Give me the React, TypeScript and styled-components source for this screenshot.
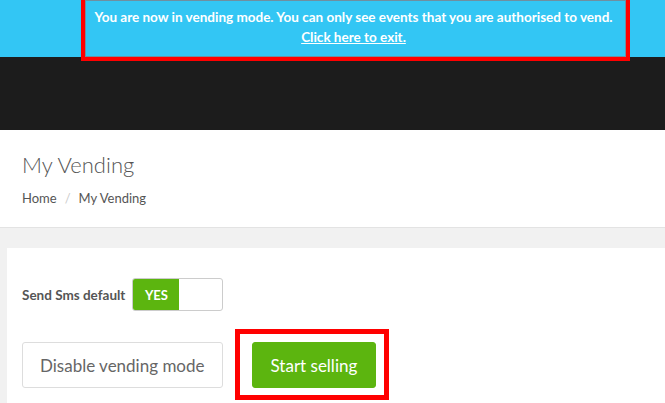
import styled, { createGlobalStyle } from 'styled-components';

const GlobalStyle = createGlobalStyle`
  html, body {
    margin: 0;
    padding: 0;
    background: #f1f1f1;
    font-family: Lato, "Noto Sans", sans-serif;
    color: #555;
    overflow: hidden;
  }
`;

const Page = styled.div`
  width: 665px;
  height: 403px;
  overflow: hidden;
  display: flex;
  flex-direction: column;
`;

const VendingBanner = styled.div`
  position: relative;
  height: 57px;
  background: #33c6f4;
  color: #fff;
  font-weight: 700;
  font-size: 13.5px;
  line-height: 20px;
  display: flex;
  flex-direction: column;
  align-items: center;
  padding: 7px 0 0 42px;
  box-sizing: border-box;
`;

const ExitLink = styled.a`
  color: #fff;
  text-decoration: underline;
  cursor: pointer;
`;

const Highlight = styled.div<{ $top: number; $left: number; $width: number; $height: number; $weight: number }>`
  position: absolute;
  top: ${({ $top }) => $top}px;
  left: ${({ $left }) => $left}px;
  width: ${({ $width }) => $width}px;
  height: ${({ $height }) => $height}px;
  border: ${({ $weight }) => $weight}px solid #ff0000;
  box-sizing: border-box;
  pointer-events: none;
`;

const InnerEdge = styled.div`
  width: 100%;
  height: 100%;
  border: 1px solid #6f8fa0;
  box-sizing: border-box;
`;

const NavBar = styled.div`
  height: 73px;
  background: #1c1c1c;
`;

const PageHeader = styled.div`
  background: #fff;
  border-bottom: 1px solid #e3e3e3;
  padding: 20px 22px 0;
  height: 98px;
  box-sizing: border-box;
`;

const Title = styled.h1`
  margin: 0;
  font-size: 22px;
  font-weight: 300;
  color: #555;
  line-height: 30px;
`;

const Breadcrumb = styled.div`
  margin-top: 10px;
  font-size: 13px;
  display: flex;
  gap: 8px;
  color: #555;
`;

const Crumb = styled.span<{ $muted?: boolean }>`
  color: ${({ $muted }) => ($muted ? '#ccc' : '#555')};
`;

const Content = styled.div`
  padding: 20px 0 0 7px;
  flex: 1;
`;

const Card = styled.div`
  position: relative;
  background: #fff;
  height: 100%;
  padding: 30px 0 0 15px;
  box-sizing: border-box;
`;

const SmsRow = styled.div`
  display: flex;
  align-items: center;
  gap: 7px;
`;

const Label = styled.span`
  font-size: 13.5px;
  font-weight: 700;
  color: #555;
`;

const Toggle = styled.div`
  width: 91px;
  height: 33px;
  border: 1px solid #ccc;
  border-radius: 3px;
  box-sizing: border-box;
  display: flex;
  overflow: hidden;
`;

const ToggleOn = styled.div`
  width: 46px;
  background: #5cb50f;
  color: #fff;
  font-size: 13px;
  font-weight: 700;
  display: flex;
  align-items: center;
  justify-content: center;
`;

const Actions = styled.div`
  display: flex;
  gap: 29px;
  margin-top: 31px;
`;

const Button = styled.button<{ $primary?: boolean }>`
  height: 46px;
  padding: 0 ${({ $primary }) => ($primary ? 18 : 17)}px;
  font-family: Lato, "Noto Sans", sans-serif;
  font-size: 17px;
  border-radius: 3px;
  cursor: pointer;
  box-sizing: border-box;
  border: 1px solid ${({ $primary }) => ($primary ? '#5cb50f' : '#ddd')};
  background: ${({ $primary }) => ($primary ? '#5cb50f' : '#fff')};
  color: ${({ $primary }) => ($primary ? '#fff' : '#666')};
`;

const App = () => (
  <Page>
    <GlobalStyle />
    <VendingBanner>
      <span>You are now in vending mode. You can only see events that you are authorised to vend.</span>
      <ExitLink>Click here to exit.</ExitLink>
      <Highlight $top={-4} $left={81} $width={549} $height={65} $weight={4}>
        <InnerEdge />
      </Highlight>
    </VendingBanner>
    <NavBar />
    <PageHeader>
      <Title>My Vending</Title>
      <Breadcrumb>
        <Crumb>Home</Crumb>
        <Crumb $muted>/</Crumb>
        <Crumb>My Vending</Crumb>
      </Breadcrumb>
    </PageHeader>
    <Content>
      <Card>
        <SmsRow>
          <Label>Send Sms default</Label>
          <Toggle>
            <ToggleOn>YES</ToggleOn>
          </Toggle>
        </SmsRow>
        <Actions>
          <Button>Disable vending mode</Button>
          <Button $primary>Start selling</Button>
        </Actions>
        <Highlight $top={81} $left={228} $width={154} $height={71} $weight={5} />
      </Card>
    </Content>
  </Page>
);

export default App;
